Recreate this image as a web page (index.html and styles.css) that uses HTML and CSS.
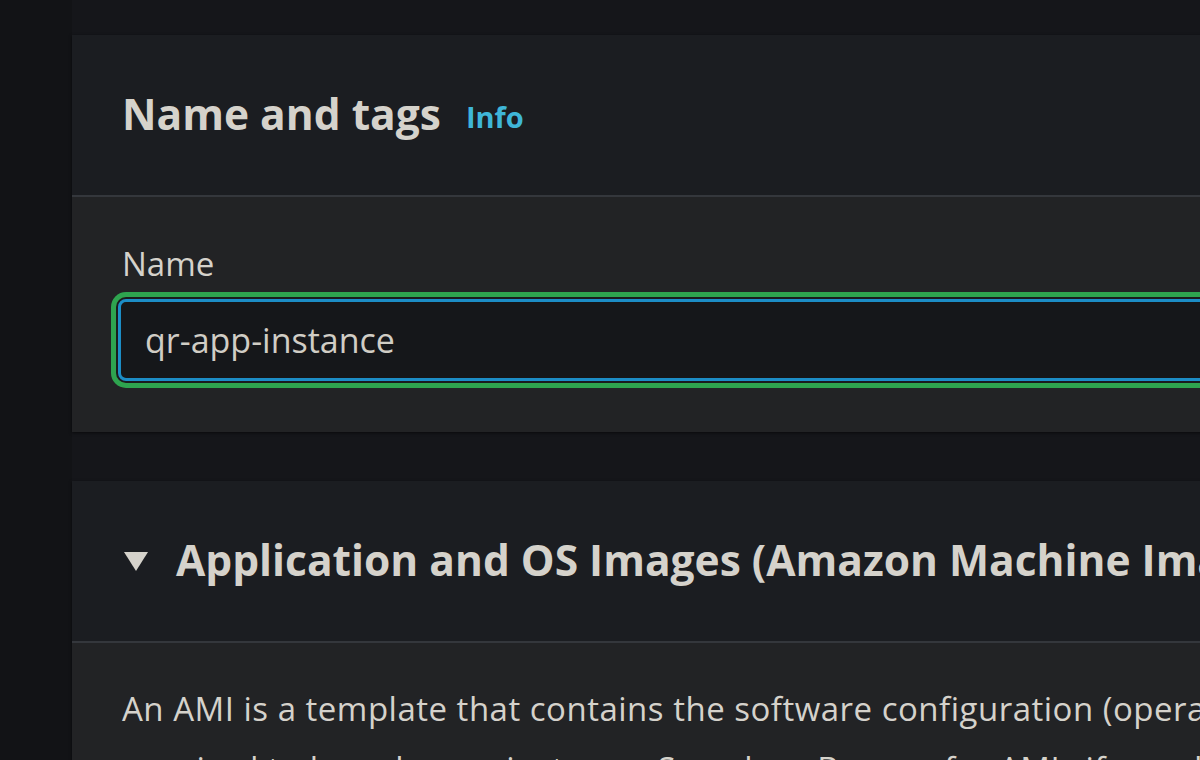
FILE: index.html
```html
<!DOCTYPE html>
<html lang="en">
<head>
<meta charset="utf-8">
<title>Launch an instance</title>
<link rel="stylesheet" href="styles.css">
</head>
<body>
<div class="layout">
  <aside class="rail"></aside>
  <main class="main">
    <section class="card">
      <header class="card-head">
        <h2 class="card-title">Name and tags</h2>
        <a class="info" href="#">Info</a>
      </header>
      <div class="card-body card-body-name">
        <label class="field-label" for="name">Name</label>
        <div class="field">
          <input id="name" class="input" type="text" value="qr-app-instance">
        </div>
      </div>
    </section>
    <section class="card">
      <header class="card-head">
        <svg class="caret" width="24" height="19" viewBox="0 0 24 19"><polygon points="0,0 24,0 12,19" fill="#d5d2cb"/></svg>
        <h2 class="card-title">Application and OS Images (Amazon Machine Image)</h2>
      </header>
      <div class="card-body card-body-ami">
        <p class="desc">An AMI is a template that contains the software configuration (operating system, application server, and applications)<br>required to launch your instance. Search or Browse for AMIs if you don't see what you are looking for below</p>
      </div>
    </section>
  </main>
</div>
</body>
</html>
```
FILE: styles.css
```css
html, body {
  margin: 0;
  padding: 0;
  height: 100%;
  overflow: hidden;
  background: #15161a;
}
body {
  font-family: "Open Sans", "Noto Sans", sans-serif;
  color: #d5d2cb;
}
.layout {
  display: flex;
  height: 100%;
}
.rail {
  flex: 0 0 72px;
  background: #121316;
}
.main {
  flex: 0 0 2400px;
  padding-top: 35px;
  display: flex;
  flex-direction: column;
  gap: 49px;
}
.card {
  background: #222325;
  box-shadow: 0 1px 3px rgba(0,0,0,0.6);
}
.card-head {
  height: 162px;
  box-sizing: border-box;
  padding-left: 50px;
  padding-bottom: 4px;
  display: flex;
  align-items: center;
  gap: 25px;
  background: #1b1d21;
  border-bottom: 2px solid #34373c;
}
.card-title {
  margin: 0;
  font-size: 42.5px;
  font-weight: 700;
  white-space: nowrap;
  color: #d5d2cb;
}
.info {
  font-size: 29px;
  font-weight: 700;
  color: #3fb6d8;
  text-decoration: none;
  margin-top: 6px;
}
.caret {
  flex: none;
  margin-left: 2px;
  margin-right: 3px;
  margin-top: 4px;
}
.card-body {
  padding: 0 50px;
}
.card-body-name {
  padding-top: 47px;
  padding-bottom: 51px;
}
.card-body-ami {
  padding-top: 36px;
  padding-bottom: 40px;
}
.field-label {
  display: block;
  font-size: 33px;
  line-height: 40px;
  font-weight: 500;
}
.field {
  margin-top: 15px;
}
.input {
  display: block;
  box-sizing: border-box;
  width: 2000px;
  height: 82px;
  margin-left: -4px;
  padding: 0 24px;
  border: 3px solid #1c8dc6;
  border-radius: 8px;
  background: #15171a;
  color: #d0cdc5;
  font-family: "Open Sans", "Noto Sans", sans-serif;
  font-size: 34px;
  box-shadow: 0 0 0 2px #1a1b1e, 0 0 0 7px #2ea44f;
  outline: none;
}
.desc {
  margin: 0;
  font-size: 33px;
  line-height: 60px;
  letter-spacing: 0.5px;
  white-space: nowrap;
}
```
